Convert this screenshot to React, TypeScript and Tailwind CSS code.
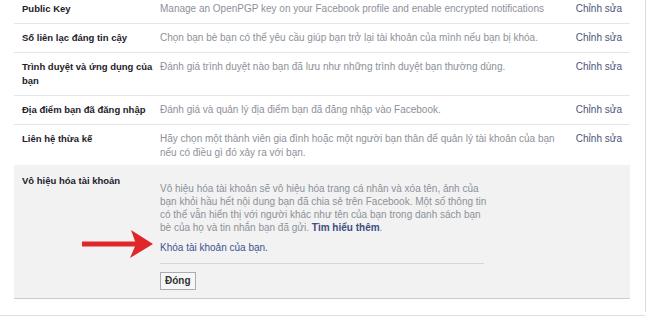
const rows = [
  {
    label: 'Public Key',
    desc: 'Manage an OpenPGP key on your Facebook profile and enable encrypted notifications',
  },
  {
    label: 'Số liên lạc đáng tin cậy',
    desc: 'Chọn bạn bè bạn có thể yêu cầu giúp bạn trở lại tài khoản của mình nếu bạn bị khóa.',
  },
  {
    label: 'Trình duyệt và ứng dụng của bạn',
    desc: 'Đánh giá trình duyệt nào bạn đã lưu như những trình duyệt bạn thường dùng.',
  },
  {
    label: 'Địa điểm bạn đã đăng nhập',
    desc: 'Đánh giá và quản lý địa điểm bạn đã đăng nhập vào Facebook.',
  },
  {
    label: 'Liên hệ thừa kế',
    desc: 'Hãy chọn một thành viên gia đình hoặc một người bạn thân để quản lý tài khoản của bạn nếu có điều gì đó xảy ra với bạn.',
  },
];

function Arrow() {
  return (
    <svg className="absolute left-[80px] top-[234px]" width="74" height="30" viewBox="0 0 74 30">
      <rect x="2" y="12.5" width="54" height="5" fill="#e0262a" />
      <polygon points="73,15 51,1 56,15 50,29" fill="#e0262a" />
    </svg>
  );
}

export default function App() {
  return (
    <div className="w-[650px] h-[317px] overflow-hidden bg-white font-['Liberation_Sans',Arial,sans-serif] text-[10px]">
      <div className="relative w-[646px] h-[317px] border-r border-[#d8dade]">
        {/* Setting rows */}
        <div className="ml-[14px] w-[616px] -mt-[5px]">
          {rows.map((row, i) => (
            <div
              key={row.label}
              className={`flex pt-[7px] leading-[14px] ${i < rows.length - 1 ? 'pb-[7px] border-b border-[#e5e6e9]' : 'pb-[5px]'}`}
            >
              <div className="w-[146px] shrink-0 pl-[8px] pr-[6px] text-[9.5px] font-bold text-[#1d2129]">
                <div className="w-[132px]">{row.label}</div>
              </div>
              <div className="w-[400px] text-[#8d9199]">{row.desc}</div>
              <div className="ml-auto pr-[8px] text-[#4a5478]">Chỉnh sửa</div>
            </div>
          ))}
        </div>

        {/* Deactivate panel */}
        <div className="ml-[14px] w-[616px] bg-[#f2f2f2] border-b border-[#c9cbcf] flex pt-[9px] pb-[8px]">
          <div className="w-[146px] shrink-0 pl-[8px] text-[9.5px] font-bold leading-[14px] text-[#1d2129]">
            Vô hiệu hóa tài khoản
          </div>
          <div className="w-[324px] pt-[8px]">
            <p className="w-[331px] leading-[13px] text-[#8d9199]">
              Vô hiệu hóa tài khoản sẽ vô hiệu hóa trang cá nhân và xóa tên, ảnh của bạn khỏi hầu hết nội dung bạn đã chia sẻ trên Facebook. Một số thông tin có thể vẫn hiển thị với người khác như tên của bạn trong danh sách bạn bè của họ và tin nhắn bạn đã gửi. <span className="font-bold text-[#3b4f80]">Tìm hiểu thêm</span>.
            </p>
            <p className="mt-[7px] leading-[13px] text-[#3b5391]">Khóa tài khoản của bạn.</p>
            <div className="mt-[9px] border-t border-[#d6d7da] pt-[8px]">
              <button className="h-[18px] px-[4px] border border-[#a9acb1] bg-[#f6f7f9] text-[10px] font-bold leading-[16px] text-[#333]">
                Đóng
              </button>
            </div>
          </div>
        </div>

        <div className="mt-[16px] border-t border-[#dcdde0]" />

        <Arrow />
      </div>
    </div>
  );
}
